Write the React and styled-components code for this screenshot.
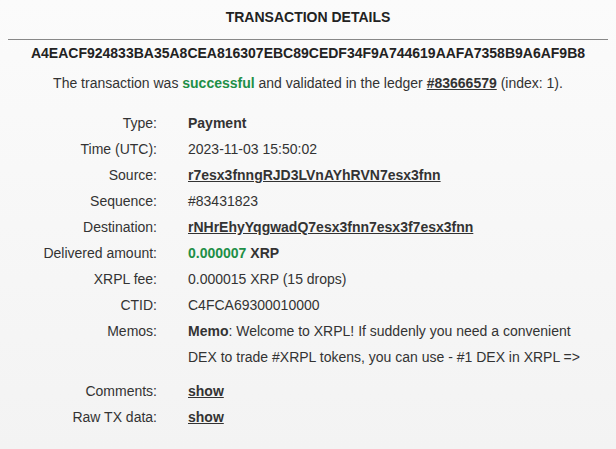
import React from "react";
import styled, { createGlobalStyle } from "styled-components";

const GlobalStyle = createGlobalStyle`
  html, body {
    margin: 0;
    padding: 0;
  }
  body {
    font-family: "Liberation Sans", Arial, sans-serif;
    font-size: 14px;
    color: #333;
  }
`;

const Page = styled.div`
  width: 616px;
  height: 449px;
  box-sizing: border-box;
  padding: 0 8px;
  background: linear-gradient(#fbfbfb, #f3f3f3);
  overflow: hidden;
`;

const Title = styled.div`
  text-transform: uppercase;
  font-weight: 700;
  text-align: center;
  color: #222;
  line-height: 20px;
  padding: 7px 0 12px;
  border-bottom: 1px solid #888;
`;

const Hash = styled.div`
  font-weight: 700;
  text-align: center;
  color: #222;
  line-height: 20px;
  margin-top: 3px;
`;

const Status = styled.div`
  text-align: center;
  line-height: 20px;
  margin-top: 10px;
`;

const Green = styled.span`
  color: #1e8f47;
  font-weight: 700;
`;

const A = styled.a`
  color: #333;
  font-weight: 700;
  text-decoration: underline;
`;

const Table = styled.div`
  margin-top: 17px;
  display: flex;
  flex-direction: column;
`;

const Row = styled.div`
  display: grid;
  grid-template-columns: 149px 414px;
  column-gap: 31px;
  line-height: 26px;
  margin-bottom: ${(p) => (p.$spaced ? "8px" : "0")};
`;

const Label = styled.div`
  text-align: right;
`;

const Value = styled.div``;

const App = () => {
  const rows = [
    { label: "Type:", value: <b>Payment</b> },
    { label: "Time (UTC):", value: "2023-11-03 15:50:02" },
    { label: "Source:", value: <A href="#">r7esx3fnngRJD3LVnAYhRVN7esx3fnn</A> },
    { label: "Sequence:", value: "#83431823" },
    {
      label: "Destination:",
      value: <A href="#">rNHrEhyYqgwadQ7esx3fnn7esx3f7esx3fnn</A>,
    },
    {
      label: "Delivered amount:",
      value: (
        <>
          <Green>0.000007</Green> <b>XRP</b>
        </>
      ),
    },
    { label: "XRPL fee:", value: "0.000015 XRP (15 drops)" },
    { label: "CTID:", value: "C4FCA69300010000" },
    {
      label: "Memos:",
      value: (
        <>
          <b>Memo</b>: Welcome to XRPL! If suddenly you need a convenient DEX
          to trade #XRPL tokens, you can use - #1 DEX in XRPL =&gt;
        </>
      ),
      spaced: true,
    },
    { label: "Comments:", value: <A href="#">show</A> },
    { label: "Raw TX data:", value: <A href="#">show</A> },
  ];

  return (
    <Page>
      <GlobalStyle />
      <Title>Transaction details</Title>
      <Hash>A4EACF924833BA35A8CEA816307EBC89CEDF34F9A744619AAFA7358B9A6AF9B8</Hash>
      <Status>
        The transaction was <Green>successful</Green> and validated in the
        ledger <A href="#">#83666579</A> (index: 1).
      </Status>
      <Table>
        {rows.map((r) => (
          <Row key={r.label} $spaced={r.spaced}>
            <Label>{r.label}</Label>
            <Value>{r.value}</Value>
          </Row>
        ))}
      </Table>
    </Page>
  );
};

export default App;
